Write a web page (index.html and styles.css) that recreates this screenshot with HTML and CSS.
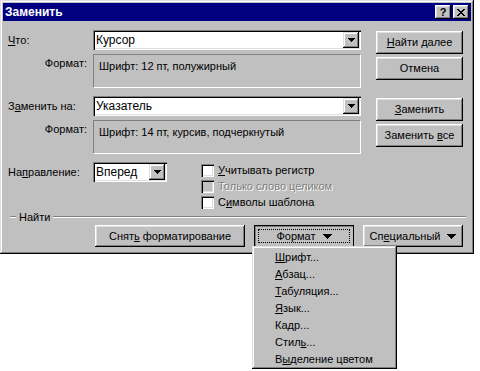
FILE: index.html
```html
<!DOCTYPE html>
<html lang="ru">
<head>
	<meta charset="UTF-8">
	<title>Заменить</title>
	<link rel="stylesheet" href="styles.css">
</head>
<body>
	<div class="screen">
		<div class="dialog">
			<!-- заголовок окна -->
			<div class="titlebar">
				<span class="title">Заменить</span>
				<div class="caps">
					<span class="cap-btn">?</span>
					<span class="cap-btn">
						<svg width="8" height="7" viewBox="0 0 8 7" shape-rendering="crispEdges"><path d="M0 0h2v1h-2zM6 0h2v1h-2zM1 1h2v1h-2zM5 1h2v1h-2zM2 2h4v1h-4zM3 3h2v1h-2zM2 4h4v1h-4zM1 5h2v1h-2zM5 5h2v1h-2zM0 6h2v1h-2zM6 6h2v1h-2z" fill="#000"/></svg>
					</span>
				</div>
			</div>

			<div class="content">
				<div class="top">
					<div class="form">
						<div class="row">
							<span class="lbl"><u>Ч</u>то:</span>
							<div class="field">
								<span class="val">Курсор</span>
								<span class="drop"><svg width="7" height="4" viewBox="0 0 7 4" shape-rendering="crispEdges"><path d="M0 0h7v1h-1v1h-1v1h-1v1h-1v-1h-1v-1h-1v-1h-1z" fill="#000"/></svg></span>
							</div>
						</div>
						<div class="row fmt-row">
							<span class="lbl fmt-lbl">Формат:</span>
							<div class="fmtbox">Шрифт: 12 пт, полужирный</div>
						</div>

						<div class="row row-gap">
							<span class="lbl">З<u>а</u>менить на:</span>
							<div class="field">
								<span class="val">Указатель</span>
								<span class="drop"><svg width="7" height="4" viewBox="0 0 7 4" shape-rendering="crispEdges"><path d="M0 0h7v1h-1v1h-1v1h-1v1h-1v-1h-1v-1h-1v-1h-1z" fill="#000"/></svg></span>
							</div>
						</div>
						<div class="row fmt-row">
							<span class="lbl fmt-lbl">Формат:</span>
							<div class="fmtbox">Шрифт: 14 пт, курсив, подчеркнутый</div>
						</div>

						<div class="row row-gap dir-row">
							<span class="lbl dir-lbl">На<u>п</u>равление:</span>
							<div class="field small">
								<span class="val">Вперед</span>
								<span class="drop"><svg width="7" height="4" viewBox="0 0 7 4" shape-rendering="crispEdges"><path d="M0 0h7v1h-1v1h-1v1h-1v1h-1v-1h-1v-1h-1v-1h-1z" fill="#000"/></svg></span>
							</div>
							<div class="checks">
								<div class="check"><span class="box"></span><span><u>У</u>читывать регистр</span></div>
								<div class="check disabled"><span class="box"></span><span>Только слово целиком</span></div>
								<div class="check"><span class="box"></span><span>С<u>и</u>мволы шаблона</span></div>
							</div>
						</div>
					</div>

					<div class="btns">
						<div class="btn"><span><u>Н</u>айти далее</span></div>
						<div class="btn gap-s">Отмена</div>
						<div class="btn gap-l"><span><u>З</u>аменить</span></div>
						<div class="btn gap-s"><span>Заменить <u>в</u>се</span></div>
					</div>
				</div>

				<!-- группа "Найти" -->
				<div class="group">
					<span class="group-line short"></span>
					<span class="group-title">Найти</span>
					<span class="group-line"></span>
				</div>

				<div class="bottom">
					<div class="btn wide"><span>Снят<u>ь</u> форматирование</span></div>
					<div class="btn mid pressed">
						<span>Формат</span>
						<svg width="9" height="5" viewBox="0 0 9 5" shape-rendering="crispEdges"><path d="M0 0h9v1h-1v1h-1v1h-1v1h-1v1h-1v-1h-1v-1h-1v-1h-1v-1h-1z" fill="#000"/></svg>
					</div>
					<div class="btn mid">
						<span>Сп<u>е</u>циальный</span>
						<svg width="9" height="5" viewBox="0 0 9 5" shape-rendering="crispEdges"><path d="M0 0h9v1h-1v1h-1v1h-1v1h-1v1h-1v-1h-1v-1h-1v-1h-1v-1h-1z" fill="#000"/></svg>
					</div>
				</div>
			</div>
		</div>

		<!-- выпадающее меню кнопки Формат -->
		<div class="menu">
			<div class="item"><u>Ш</u>рифт...</div>
			<div class="item"><u>А</u>бзац...</div>
			<div class="item"><u>Т</u>абуляция...</div>
			<div class="item"><u>Я</u>зык...</div>
			<div class="item">Ка<u>д</u>р...</div>
			<div class="item">Стил<u>ь</u>...</div>
			<div class="item">В<u>ы</u>деление цветом</div>
		</div>
	</div>
</body>
</html>
```

FILE: styles.css
```css
* {
	box-sizing: border-box;
}
body {
	margin: 0;
	background: #fff;
	font-family: "Liberation Sans", Arial, sans-serif;
	font-size: 11px;
	line-height: 13px;
	color: #000;
}
u {
	text-underline-offset: 1px;
}
.screen {
	position: relative;
	width: 480px;
	height: 371px;
}

/* окно */
.dialog {
	width: 474px;
	height: 254px;
	padding: 3px;
	background: #c0c0c0;
	box-shadow: inset -1px -1px #000, inset 1px 1px #dfdfdf, inset -2px -2px #808080, inset 2px 2px #fff;
}
.titlebar {
	height: 18px;
	padding: 0 2px;
	background: #000080;
	display: flex;
	align-items: center;
	justify-content: space-between;
}
.title {
	color: #fff;
	font-weight: bold;
	font-size: 12px;
}
.caps {
	display: flex;
	gap: 2px;
}
.cap-btn {
	width: 16px;
	height: 14px;
	background: #c0c0c0;
	box-shadow: inset -1px -1px #000, inset 1px 1px #fff, inset -2px -2px #808080, inset 2px 2px #dfdfdf;
	display: flex;
	align-items: center;
	justify-content: center;
	font-weight: bold;
	font-size: 11px;
}

/* содержимое */
.content {
	padding: 9px 0 0 5px;
}
.top {
	display: flex;
	align-items: flex-start;
}
.form {
	width: 353px;
}
.row {
	display: flex;
	align-items: center;
}
.row-gap {
	margin-top: 8px;
}
.lbl {
	width: 85px;
	flex: none;
}
.field {
	width: 268px;
	height: 20px;
	padding: 2px;
	background: #fff;
	box-shadow: inset 1px 1px #808080, inset 2px 2px #000, inset -1px -1px #fff, inset -2px -2px #dfdfdf;
	display: flex;
	align-items: center;
}
.field.small {
	width: 74px;
}
.val {
	flex: 1;
	padding-left: 1px;
	font-size: 12px;
}
.drop {
	width: 16px;
	height: 16px;
	background: #c0c0c0;
	box-shadow: inset -1px -1px #000, inset 1px 1px #dfdfdf, inset -2px -2px #808080, inset 2px 2px #fff;
	display: flex;
	align-items: center;
	justify-content: center;
}
.fmt-row {
	margin-top: 4px;
	align-items: flex-start;
}
.fmt-lbl {
	text-align: right;
	padding: 3px 6px 0 0;
}
.fmtbox {
	width: 268px;
	height: 34px;
	padding: 5px 0 0 5px;
	border-top: 1px solid #808080;
	border-left: 1px solid #808080;
	border-bottom: 1px solid #fff;
	border-right: 1px solid #fff;
}
.dir-row {
	align-items: flex-start;
}
.dir-lbl {
	line-height: 20px;
}

/* флажки */
.checks {
	margin-left: 34px;
}
.check {
	height: 16px;
	display: flex;
	align-items: center;
	gap: 4px;
}
.box {
	width: 13px;
	height: 13px;
	background: #fff;
	box-shadow: inset 1px 1px #808080, inset 2px 2px #000, inset -1px -1px #fff, inset -2px -2px #dfdfdf;
}
.disabled {
	color: #808080;
	text-shadow: 1px 1px #fff;
}
.disabled .box {
	background: #c0c0c0;
}

/* кнопки */
.btns {
	margin: 1px 0 0 15px;
	display: flex;
	flex-direction: column;
}
.btn {
	width: 87px;
	height: 23px;
	background: #c0c0c0;
	box-shadow: inset -1px -1px #000, inset 1px 1px #fff, inset -2px -2px #808080, inset 2px 2px #dfdfdf;
	display: flex;
	align-items: center;
	justify-content: center;
	gap: 7px;
}
.gap-s {
	margin-top: 3px;
}
.gap-l {
	margin-top: 18px;
}
.group {
	margin-left: 2px;
	width: 456px;
	height: 14px;
	display: flex;
	align-items: center;
}
.group-line {
	flex: 1;
	height: 2px;
	border-top: 1px solid #808080;
	border-bottom: 1px solid #fff;
}
.group-line.short {
	flex: none;
	width: 6px;
}
.group-title {
	padding: 0 3px;
}
.bottom {
	margin: 1px 0 0 87px;
	display: flex;
	gap: 9px;
}
.bottom .btn {
	height: 22px;
}
.btn.wide {
	width: 150px;
}
.btn.mid {
	width: 100px;
}
.btn.pressed {
	box-shadow: inset 0 0 0 1px #000, inset 1px 1px 0 1px #808080;
	outline: 1px dotted #000;
	outline-offset: -5px;
}

/* меню */
.menu {
	position: absolute;
	left: 252px;
	top: 246px;
	width: 145px;
	height: 123px;
	padding: 3px 3px;
	background: #c0c0c0;
	box-shadow: inset -1px -1px #000, inset 1px 1px #dfdfdf, inset -2px -2px #808080, inset 2px 2px #fff;
}
.item {
	height: 17px;
	line-height: 17px;
	padding-left: 20px;
}
```
